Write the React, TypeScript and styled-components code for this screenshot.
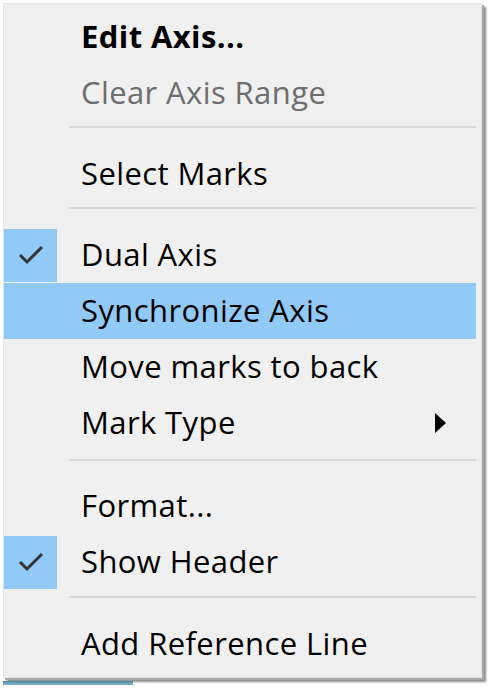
import React from "react";
import styled, { createGlobalStyle } from "styled-components";

const Global = createGlobalStyle`
  html, body { margin: 0; padding: 0; background: #ffffff; }
  body { font-family: "Open Sans", "Noto Sans", "Liberation Sans", sans-serif; }
`;

const Page = styled.div`
  width: 492px;
  height: 688px;
  padding: 3px 0 0 3px;
  box-sizing: border-box;
  position: relative;
  overflow: hidden;
`;

const Menu = styled.div`
  width: 479px;
  height: 675px;
  box-sizing: border-box;
  background: #f0f0f0;
  border: 1px solid #e2e2e2;
  padding: 5px 5px 0 0;
  display: flex;
  flex-direction: column;
  box-shadow: 2px 2px 0 #a8a8a8, 4px 4px 2px #8a8a8a;
`;

const Item = styled.div<{ $highlight?: boolean; $disabled?: boolean; $bold?: boolean }>`
  height: 56px;
  flex-shrink: 0;
  display: flex;
  align-items: center;
  background: ${(p) => (p.$highlight ? "#91c9f7" : "transparent")};
  color: ${(p) => (p.$disabled ? "#6d6d6d" : "#000000")};
  font-weight: ${(p) => (p.$bold ? 700 : 400)};
  font-size: 31px;
  letter-spacing: 0.4px;
  position: relative;
`;

const CheckCol = styled.div<{ $checked?: boolean }>`
  width: 53px;
  height: 53px;
  margin-right: 24px;
  display: flex;
  align-items: center;
  justify-content: center;
  background: ${(p) => (p.$checked ? "#91c9f7" : "transparent")};
`;

const Label = styled.span`
  flex: 1;
  line-height: 1;
  padding-bottom: 2px;
`;

const Arrow = styled.svg`
  width: 12px;
  height: 20px;
  margin-right: 30px;
`;

const Separator = styled.div<{ $top: number; $bottom: number }>`
  height: 2px;
  flex-shrink: 0;
  margin: ${(p) => p.$top}px 0 ${(p) => p.$bottom}px 65px;
  background: #d9d9d9;
`;

const UnderBar = styled.div`
  width: 130px;
  height: 4px;
  margin-top: 3px;
  background: linear-gradient(#4f8aa0, #7fb3c6);
`;

const Check = () => (
  <svg width="26" height="22" viewBox="0 0 26 22">
    <polyline points="2,11 9,18 24,3" fill="none" stroke="#333333" strokeWidth="3" />
  </svg>
);

export default function App() {
  return (
    <Page>
      <Global />
      <Menu>
        <Item $bold>
          <CheckCol />
          <Label>Edit Axis...</Label>
        </Item>
        <Item $disabled>
          <CheckCol />
          <Label>Clear Axis Range</Label>
        </Item>
        <Separator $top={5} $bottom={18} />
        <Item>
          <CheckCol />
          <Label>Select Marks</Label>
        </Item>
        <Separator $top={5} $bottom={18} />
        <Item>
          <CheckCol $checked>
            <Check />
          </CheckCol>
          <Label>Dual Axis</Label>
        </Item>
        <Item $highlight>
          <CheckCol />
          <Label>Synchronize Axis</Label>
        </Item>
        <Item>
          <CheckCol />
          <Label>Move marks to back</Label>
        </Item>
        <Item>
          <CheckCol />
          <Label>Mark Type</Label>
          <Arrow viewBox="0 0 12 20">
            <polygon points="1,0 12,10 1,20" fill="#000000" />
          </Arrow>
        </Item>
        <Separator $top={8} $bottom={17} />
        <Item>
          <CheckCol />
          <Label>Format...</Label>
        </Item>
        <Item>
          <CheckCol $checked>
            <Check />
          </CheckCol>
          <Label>Show Header</Label>
        </Item>
        <Separator $top={6} $bottom={18} />
        <Item>
          <CheckCol />
          <Label>Add Reference Line</Label>
        </Item>
      </Menu>
      <UnderBar />
    </Page>
  );
}
